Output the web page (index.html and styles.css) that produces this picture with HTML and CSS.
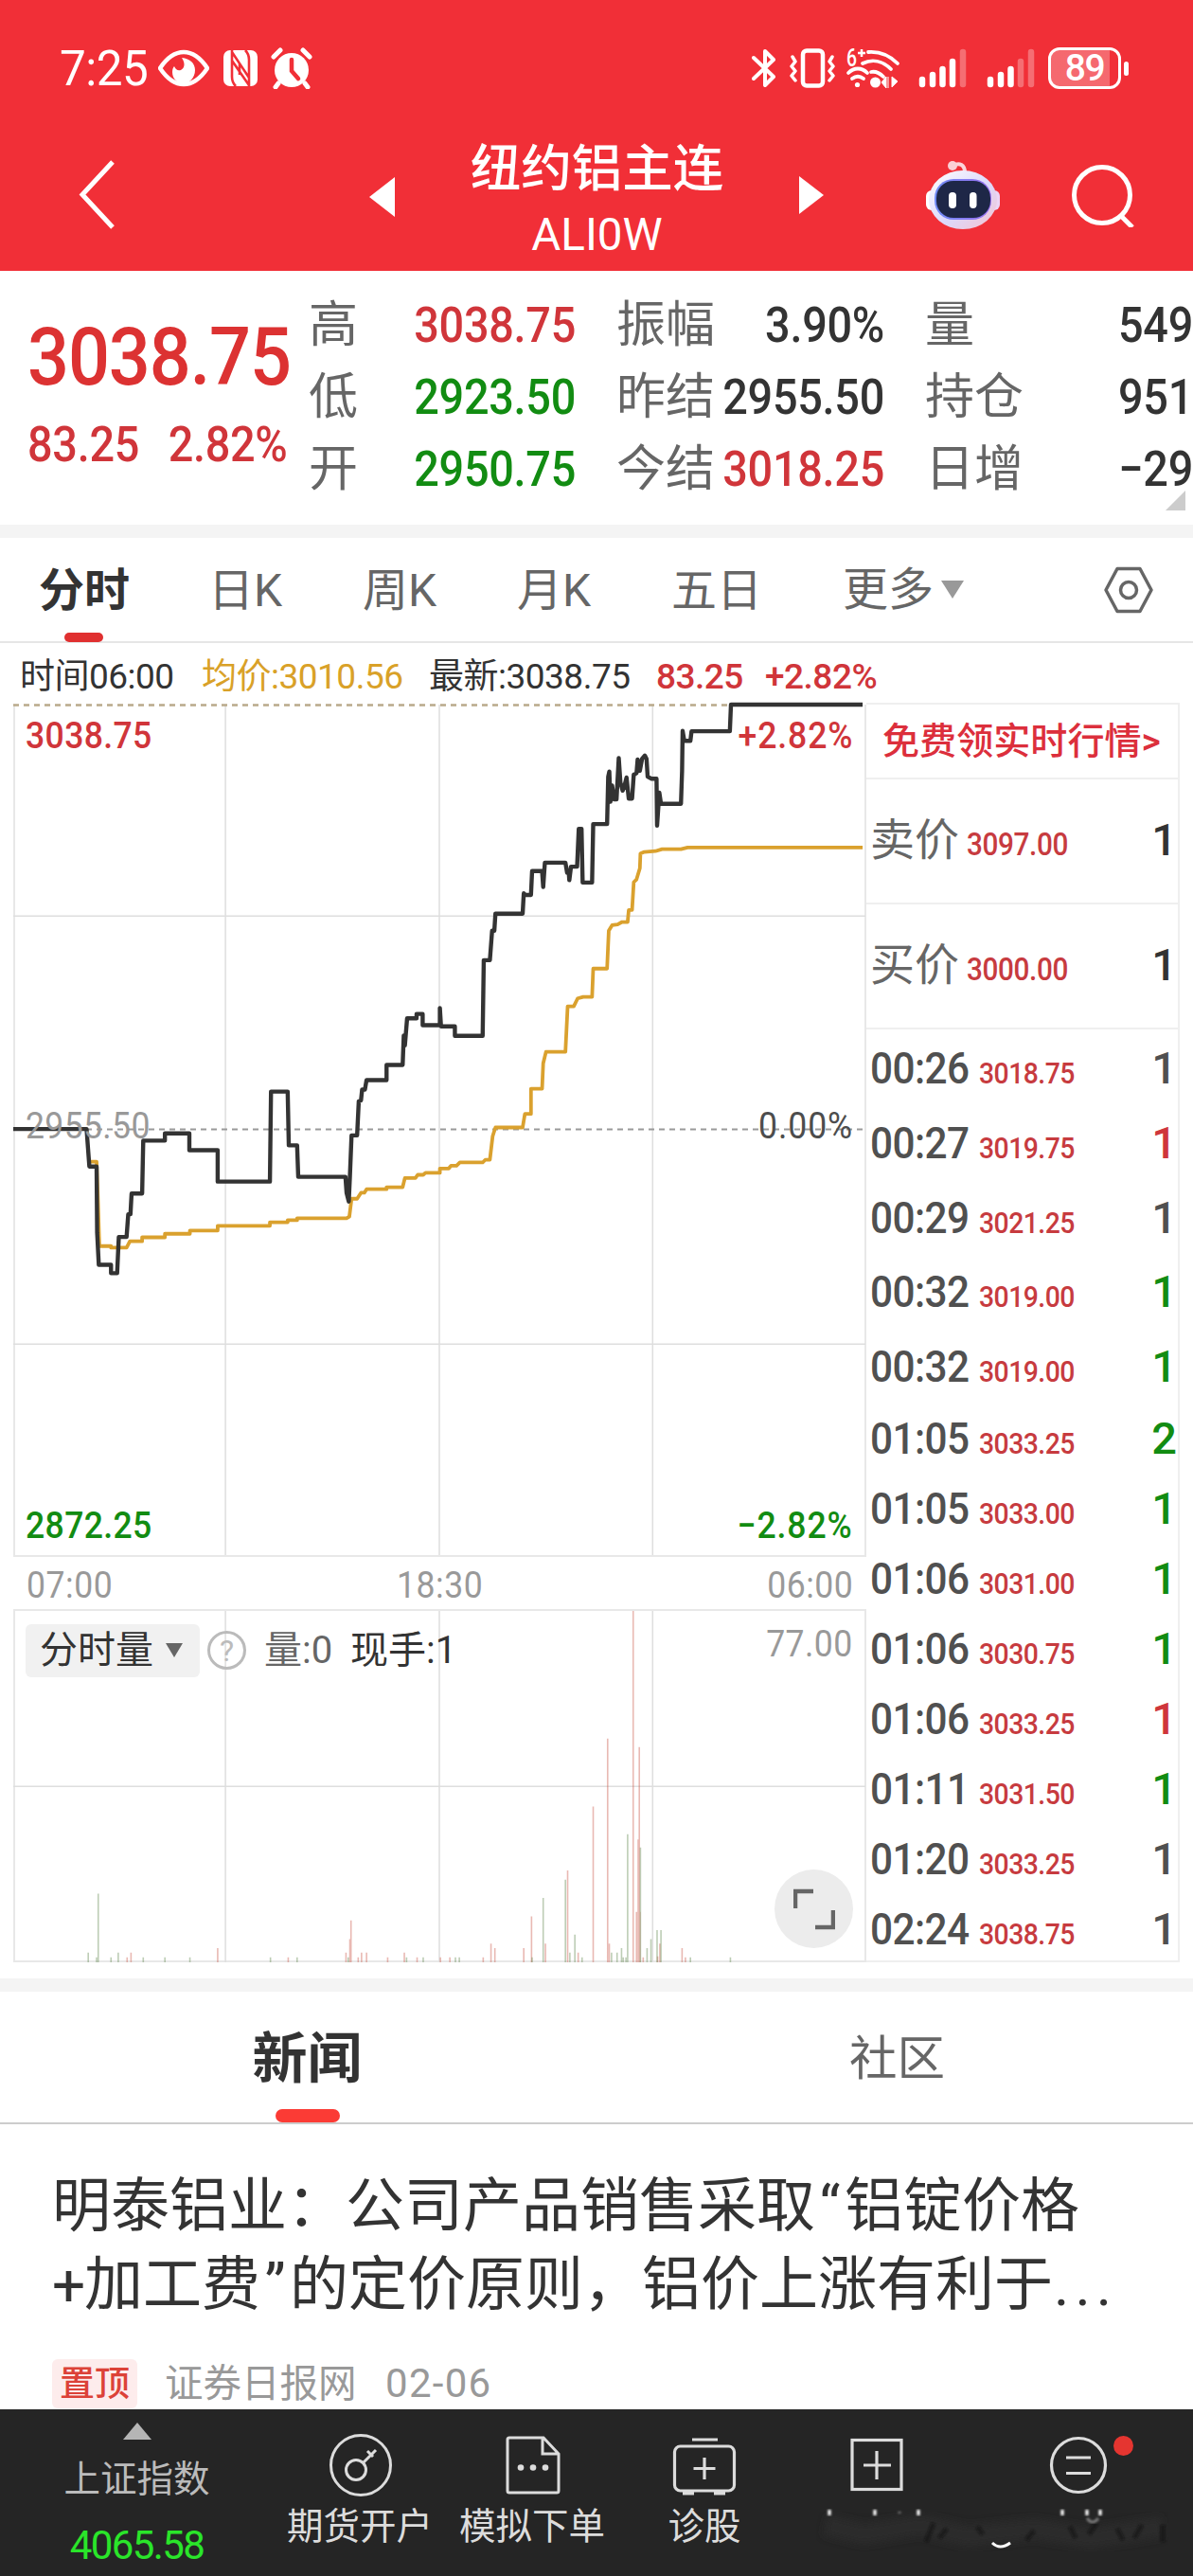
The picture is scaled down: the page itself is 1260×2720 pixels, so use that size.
FILE: index.html
```html
<!DOCTYPE html>
<html lang="zh-CN">
<head>
<meta charset="utf-8">
<title>纽约铝主连 ALI0W</title>
<link rel="stylesheet" href="styles.css">
</head>
<body>
<div class="page">

  <header class="header">
    <div class="status-bar">
      <span class="clock">7:25</span>
      <svg class="st-eye" width="54" height="40" viewBox="0 0 54 40">
        <path d="M2 20C10 8 18 3 27 3s17 5 25 17C44 32 36 37 27 37S10 32 2 20z" fill="none" stroke="#fff" stroke-width="4.5" stroke-linejoin="round"/>
        <path d="M25 9c9 1 14 6 14 13 0 8-6 14-12 14s-12-4-12-12c0-3 1-5 2-6 2 4 4 5 7 4 4-2 5-7 1-13z" fill="#fff"/>
      </svg>
      <svg class="st-nfc" width="38" height="40" viewBox="0 0 38 40">
        <rect x="1" y="1" width="36" height="38" rx="7" fill="#fff"/>
        <path d="M10 1v28c0 5 2 8 4 10M28 39V11c0-5-2-8-4-10M10 3l18 27M10 12l18 26M18 15v12" fill="none" stroke="#f12f37" stroke-width="2.6"/>
      </svg>
      <svg class="st-alarm" width="44" height="44" viewBox="0 0 44 44">
        <circle cx="22" cy="24" r="18" fill="#fff"/>
        <path d="M3 10l7-7M41 10l-7-7M8 38l-3 4M36 38l3 4" stroke="#fff" stroke-width="5" stroke-linecap="round"/>
        <path d="M22 13v12l7 8" fill="none" stroke="#f12f37" stroke-width="4.5" stroke-linecap="round"/>
      </svg>

      <svg class="st-bt" width="26" height="42" viewBox="0 0 26 42">
        <path d="M2 10l21 20-9 9V3l9 9L2 32" fill="none" stroke="#fff" stroke-width="4" stroke-linejoin="round" stroke-linecap="round"/>
      </svg>
      <svg class="st-vib" width="50" height="42" viewBox="0 0 50 42">
        <rect x="14" y="2.5" width="21" height="37" rx="4" fill="none" stroke="#fff" stroke-width="4.5"/>
        <path d="M3 9l3 5-4 5 4 5-4 5 4 5M45 9l-3 5 4 5-4 5 4 5-4 5" fill="none" stroke="#fff" stroke-width="3.5" stroke-linejoin="round" stroke-linecap="round"/>
      </svg>
      <svg class="st-wifi" width="56" height="44" viewBox="0 0 56 44">
        <text x="0" y="20" class="wifi-gen" textLength="11" lengthAdjust="spacingAndGlyphs">6</text>
        <path d="M12 6h8M16 2v8" stroke="#fff" stroke-width="2.5"/>
        <path d="M23 5c13-1 23 4 31 12M17 17c10-5 21-3 30 6M26 26c5-1 9 1 13 5M2 27c6-6 14-6 20 0M6 33c4-3 8-3 12 0" fill="none" stroke="#fff" stroke-width="3.8" stroke-linecap="round"/>
        <circle cx="11.500" cy="39.500" r="2.600" fill="#fff"/><circle cx="30.500" cy="37" r="5.500" fill="#fff"/>
        <path d="M37 37l5-6v12zM44 31v12M54 36l-6 6V31z" fill="#fff" stroke="#fff"/>
      </svg>
      <svg class="st-sig" width="52" height="42" viewBox="0 0 52 42" stroke="#fff" stroke-width="6.500" stroke-linecap="round">
        <path d="M4 33v5M15 28v10M25.500 22v16M36 14v24"/><path d="M47 4v34" opacity=".3"/>
      </svg>
      <svg class="st-sig2" width="52" height="42" viewBox="0 0 52 42" stroke="#fff" stroke-width="6.500" stroke-linecap="round">
        <path d="M4 33v5M15 28v10M25.500 22v16"/><path d="M36 14v24M47 4v34" opacity=".3"/>
      </svg>
      <span class="battery">89</span>
      <span class="battery-tip"></span>
    </div>

    <div class="nav-bar">
      <svg class="nav-back" width="42" height="74" viewBox="0 0 42 74"><path d="M37 2L5 36.500 37 71" fill="none" stroke="#fff" stroke-width="5"/></svg>
      <svg class="nav-prev" width="27" height="42" viewBox="0 0 27 42"><path d="M27 0v42L0 21z" fill="#fff"/></svg>
      <div class="nav-title">
        <div class="nav-name">纽约铝主连</div>
        <div class="nav-code">ALI0W</div>
      </div>
      <svg class="nav-next" width="27" height="40" viewBox="0 0 27 40"><path d="M0 0v40l26-20z" fill="#fff"/></svg>
      <svg class="nav-robot" width="80" height="74" viewBox="0 0 80 74">
        <defs>
          <linearGradient id="shell" x1="0" y1="0" x2="1" y2="1"><stop offset="0" stop-color="#fff"/><stop offset=".55" stop-color="#dcd8fb"/><stop offset="1" stop-color="#f6c3cf"/></linearGradient>
          <linearGradient id="rim" x1="0" y1="0" x2="1" y2="0"><stop offset="0" stop-color="#6f8bf5"/><stop offset="1" stop-color="#9a6ff0"/></linearGradient>
        </defs>
        <path d="M30 6c6-4 12-1 12 7" fill="none" stroke="#fbd5da" stroke-width="4"/>
        <circle cx="29" cy="6" r="5" fill="#fbd0d6"/>
        <rect x="1" y="32" width="12" height="21" rx="6" fill="#fff"/><rect x="67" y="32" width="12" height="21" rx="6" fill="#ecd5f5"/>
        <ellipse cx="40" cy="42" rx="36" ry="31" fill="url(#shell)"/>
        <rect x="10" y="20" width="60" height="43" rx="20" fill="url(#rim)"/>
        <rect x="12" y="22" width="57" height="39" rx="18" fill="#1e2747"/>
        <rect x="25" y="34" width="8" height="17" rx="4" fill="#fff"/><rect x="47" y="34" width="7.500" height="17" rx="3.700" fill="#fff"/>
      </svg>
      <svg class="nav-search" width="68" height="68" viewBox="0 0 68 68"><circle cx="33" cy="34" r="29.500" fill="none" stroke="#fff" stroke-width="5"/><path d="M53 56l12 12" stroke="#fff" stroke-width="5"/></svg>
    </div>
  </header>

  <section class="quote">
    <div class="quote-main">
      <div class="last-price">3038.75</div>
      <div class="change"><span>83.25</span><span>2.82%</span></div>
    </div>
    <dl class="stats col-1">
      <dt>高</dt><dd class="up">3038.75</dd>
      <dt>低</dt><dd class="down">2923.50</dd>
      <dt>开</dt><dd class="down">2950.75</dd>
    </dl>
    <dl class="stats col-2">
      <dt>振幅</dt><dd>3.90%</dd>
      <dt>昨结</dt><dd>2955.50</dd>
      <dt>今结</dt><dd class="up">3018.25</dd>
    </dl>
    <dl class="stats col-3">
      <dt>量</dt><dd>549</dd>
      <dt>持仓</dt><dd>951</dd>
      <dt>日增</dt><dd>−29</dd>
    </dl>
    <span class="more-corner"></span>
  </section>

  <nav class="period-tabs">
    <span class="tab active">分时</span>
    <span class="tab">日K</span>
    <span class="tab">周K</span>
    <span class="tab">月K</span>
    <span class="tab">五日</span>
    <span class="tab tab-more">更多<i class="caret"></i></span>
    <svg class="setting" width="54" height="50" viewBox="0 0 54 50"><path d="M15 2.500h24L51 25 39 47.500H15L3 25z" fill="none" stroke="#666" stroke-width="3.500" stroke-linejoin="round"/><circle cx="27" cy="25" r="8.500" fill="none" stroke="#666" stroke-width="3.500"/></svg>
  </nav>

  <div class="tip-line">
    <span class="t-time">时间06:00</span>
    <span class="t-avg">均价:3010.56</span>
    <span class="t-last">最新:3038.75</span>
    <span class="t-chg up">83.25</span>
    <span class="up">+2.82%</span>
  </div>

  <section class="market">
    <div class="charts">
      <div class="price-chart">
        <svg width="900" height="898" viewBox="24 104 1534 2136" preserveAspectRatio="none">
          <path class="grid" d="M24 635H1558M24 1710H1558M406 104V2240M791 104V2240M1175 104V2240"/>
          <path class="dash" d="M24 1171H1558"/>
          <path class="dash top" d="M24 105H1558"/>
          <!-- average price -->
          <path class="line avg" d="M160 1252H174L176 1330 179 1464H200V1468H228L234 1452H256V1442H297V1433H342V1425H392V1413H486V1404H518V1399H535V1394H624L629 1390 633 1345H643L650 1330H656L660 1321H696V1316H725L729 1293H748L752 1285H762L766 1280H792V1269H808L812 1262H822L828 1254H869L874 1247H882L887 1188 892 1166H941L945 1132H956V1069H976L978 1005 983 976H1018L1022 862H1033L1040 842 1050 838H1066L1068 767H1093L1096 672 1102 658 1112 656 1120 650H1130L1132 620H1138L1141 550 1146 543 1152 515 1153 478 1160 474 1180 472 1192 467H1226L1238 463H1553"/>
          <!-- latest price -->
          <path class="line last" d="M24 1170H156L161 1264H174L175 1430 178 1511H200V1532H211L214 1441H228L231 1384H235L237 1332H256L258 1199H297V1181H341V1223H392V1302H486L488 1076H518L520 1211H535L537 1290H622L624 1330 628 1352 630 1290 633 1186H643L646 1100 650 1098 652 1071H657L660 1047H696V1009H725L727 935 729 960 733 892H750V881H761V909H792V866L794 912H819V936H869L871 746H882L886 672H890L892 629H941L943 578 946 582H956L958 522H976L978 562 981 501H1018L1021 526 1024 525 1025 545 1028 511H1039L1042 416H1047L1049 551H1066L1068 404H1093L1095 285 1097 272 1099 348 1102 307 1106 342H1110L1114 238 1117 300 1121 320 1124 310 1128 287 1132 340H1138L1141 280 1146 276 1148 242 1152 270 1156 240 1161 232 1164 240 1166 285 1173 290H1182L1183 408 1187 325 1190 353H1226L1228 270 1229 170 1232 195H1243L1245 171H1314L1316 104H1553"/>
        </svg>
        <span class="lab left tl up">3038.75</span>
        <span class="lab right tr up">+2.82%</span>
        <span class="lab left ml">2955.50</span>
        <span class="lab right mr">0.00%</span>
        <span class="lab left bl down">2872.25</span>
        <span class="lab right br down">−2.82%</span>
      </div>
      <div class="time-axis"><span>07:00</span><span>18:30</span><span>06:00</span></div>
      <div class="vol-chart">
        <svg width="900" height="371" viewBox="24 720 1534 787" preserveAspectRatio="none">
          <path class="grid" d="M24 1113H1558M406 720V1507M791 720V1507M1175 720V1507"/>
          <path class="vol-up" d="M1140 1507V720M1094 1507V1006M1151 1507V1025M1149 1507V1232M1068 1507V1158M1022 1507V1301M957 1507V1404M632 1507V1413M630 1507V1455M884 1507V1465M891 1507V1475M982 1507V1465M1146 1507V1394M1151 1507V1394M1152 1507V1394M229 1507V1496M236 1507V1485M623 1507V1485M651 1507V1485M660 1507V1485M645 1507V1496M943 1507V1475M1041 1507V1485M1097 1507V1465M1184 1507V1494M1188 1507V1465M1228 1507V1475M1234 1507V1496M728 1507V1485M751 1507V1496M793 1507V1496M810 1507V1496M870 1507V1496M698 1507V1496M1158 1507V1496M392 1507V1475M519 1507V1496"/>
          <path class="vol-down" d="M177 1507V1353M978 1507V1363M1018 1507V1322M1035 1507V1445M1130 1507V1220M1153 1507V1250M1183 1507V1435M1190 1507V1435M1172 1507V1455M1165 1507V1475M1119 1507V1475M1111 1507V1485M1101 1507V1485M1026 1507V1485M1048 1507V1496M159 1507V1485M174 1507V1496M200 1507V1496M213 1507V1485M258 1507V1496M297 1507V1496M342 1507V1496M487 1507V1496M535 1507V1496M627 1507V1496M732 1507V1496M762 1507V1496M820 1507V1496M827 1507V1496M958 1507V1496M1122 1507V1496M1127 1507V1496M1243 1507V1496M1315 1507V1496"/>
        </svg>
        <div class="vol-head">
          <span class="vol-btn">分时量<i class="caret dark"></i></span>
          <span class="help">?</span>
          <span class="vol-qty">量:0</span>
          <span class="vol-now">现手:1</span>
          <span class="vol-max">77.00</span>
        </div>
        <span class="expand"><svg width="44" height="44" viewBox="0 0 44 44"><path d="M2 21V3h19M42 23v18H23" fill="none" stroke="#666" stroke-width="4.500"/></svg></span>
      </div>
    </div>

    <aside class="panel">
      <div class="promo">免费领实时行情&gt;</div>
      <div class="bid"><b>卖价</b><em>3097.00</em><i>1</i></div>
      <div class="bid"><b>买价</b><em>3000.00</em><i>1</i></div>
      <div class="ticks">
        <div class="tick wide"><b>00:26</b><em>3018.75</em><i>1</i></div>
        <div class="tick wide"><b>00:27</b><em>3019.75</em><i class="up">1</i></div>
        <div class="tick wide"><b>00:29</b><em>3021.25</em><i>1</i></div>
        <div class="tick wide"><b>00:32</b><em>3019.00</em><i class="down">1</i></div>
        <div class="tick wide"><b>00:32</b><em>3019.00</em><i class="down">1</i></div>
        <div class="tick"><b>01:05</b><em>3033.25</em><i class="down">2</i></div>
        <div class="tick"><b>01:05</b><em>3033.00</em><i class="down">1</i></div>
        <div class="tick"><b>01:06</b><em>3031.00</em><i class="down">1</i></div>
        <div class="tick"><b>01:06</b><em>3030.75</em><i class="down">1</i></div>
        <div class="tick"><b>01:06</b><em>3033.25</em><i class="up">1</i></div>
        <div class="tick"><b>01:11</b><em>3031.50</em><i class="down">1</i></div>
        <div class="tick"><b>01:20</b><em>3033.25</em><i>1</i></div>
        <div class="tick"><b>02:24</b><em>3038.75</em><i>1</i></div>
      </div>
    </aside>
  </section>

  <nav class="news-tabs">
    <span class="news-tab active">新闻</span>
    <span class="news-tab">社区</span>
  </nav>

  <article class="news">
    <h2>明泰铝业：公司产品销售采取<span class="q">“</span>铝锭价格<br><span class="plus">+</span>加工费<span class="q">”</span>的定价原则，铝价上涨有利于<span class="dots">...</span></h2>
    <div class="meta"><span class="badge">置顶</span><span class="source">证券日报网</span><span class="date">02-06</span></div>
  </article>

  <footer class="bottom-bar">
    <div class="index">
      <i class="up-caret"></i>
      <span class="index-name">上证指数</span>
      <span class="index-value">4065.58</span>
    </div>
    <div class="item">
      <svg width="68" height="68" viewBox="0 0 68 68" fill="none" stroke="#dcdcdc" stroke-width="3"><circle cx="35" cy="34" r="31.500"/><circle cx="30" cy="39" r="10.500"/><path d="M38 31l13-13M42 19l6 6"/></svg>
      <span>期货开户</span>
    </div>
    <div class="item">
      <svg width="68" height="68" viewBox="0 0 68 68" fill="none" stroke="#dcdcdc" stroke-width="3"><path d="M46 5H10q-2 0-2 2v54q0 2 2 2h50q2 0 2-2V22zM45 5v17h17"/><g fill="#dcdcdc" stroke="none"><circle cx="22" cy="36.500" r="3.300"/><circle cx="35" cy="36.500" r="3.300"/><circle cx="48" cy="36.500" r="3.300"/></g></svg>
      <span>模拟下单</span>
    </div>
    <div class="item">
      <svg width="68" height="68" viewBox="0 0 68 68" fill="none" stroke="#dcdcdc" stroke-width="3.200"><rect x="2.500" y="14" width="63" height="47" rx="6"/><path d="M21 7h27M34 26v23M22.500 37.500h23"/><path d="M11 63h12M44 63h12" stroke-width="5"/></svg>
      <span>诊股</span>
    </div>
    <div class="item">
      <svg width="68" height="68" viewBox="0 0 68 68" fill="none" stroke="#dcdcdc" stroke-width="3.200"><rect x="8" y="7.500" width="52" height="52"/><path d="M34 19v30M20 34h29"/></svg>
    </div>
    <div class="item last-item">
      <svg width="68" height="68" viewBox="0 0 68 68" fill="none" stroke="#dcdcdc" stroke-width="3.200"><circle cx="34" cy="34" r="28.500"/><path d="M21 26h26M21 42.500h26"/></svg>
      <i class="dot"></i>
    </div>
    <!-- faded captions under the last two items -->
    <svg class="smudge" width="372" height="54" viewBox="0 0 372 54">
      <defs><filter id="soft"><feGaussianBlur stdDeviation="1.100"/></filter><filter id="haze" x="-10%" y="-100%" width="120%" height="300%"><feGaussianBlur stdDeviation="4"/></filter></defs>
      <path d="M10 18l40 10 60-10 50 12 70-8 60 10 76-12" stroke="#2f2f2f" stroke-width="22" fill="none" filter="url(#haze)" opacity=".7"/>
      <path d="M124 16l-8 20M138 22l-8 10M170 20l6 8M230 24l-8 10M268 20l6 12M296 16l-8 12M318 22l6 12M344 18l-8 14M366 18v18" stroke="#0c0c0c" stroke-width="5" fill="none" filter="url(#soft)" opacity=".5"/>
      <path d="M14 2v6M62 2v6M108 2v6M260 2v6M286 2v6M300 2v6" stroke="#fff" stroke-width="3.200" filter="url(#soft)"/>
      <path d="M88 4v2M286 11q6 8 12 0" stroke="#777" stroke-width="3" fill="none" filter="url(#soft)"/>
      <path d="M186 37q8 8 19 0" stroke="#fff" stroke-width="3" fill="none"/>
    </svg>
  </footer>

</div>
</body>
</html>
```
FILE: styles.css
```css
* {
  box-sizing: border-box;
}

body {
  margin: 0;
  background: #fff;
  color: #333;
  font-family: Roboto, "Noto Sans CJK SC", sans-serif;
}

.page {
  width: 1260px;
  height: 2720px;
  overflow: hidden;
  display: flex;
  flex-direction: column;
}

svg {
  display: block;
  flex: none;
}

i, em {
  font-style: normal;
}

b {
  font-weight: 400;
}

.up {
  color: #d0353a;
}

.down {
  color: #128c12;
}

/* header */
.header {
  height: 286px;
  flex: none;
  background: #f12f37;
  color: #fff;
}

.status-bar {
  height: 144px;
  display: flex;
  align-items: center;
  padding-left: 63px;
}

.clock {
  width: 104px;
  font-size: 52px;
  letter-spacing: -0.5px;
  transform: scaleX(0.95);
  transform-origin: left;
}

.st-nfc {
  margin-left: 14px;
}

.st-alarm {
  margin-left: 13px;
}

.st-bt {
  margin-left: 464px;
}

.st-vib {
  margin-left: 14px;
}

.st-wifi {
  margin-left: 10px;
  overflow: visible;
}

.wifi-gen {
  font: 500 26px Roboto, sans-serif;
  fill: #fff;
}

.st-sig {
  margin-left: 20px;
}

.st-sig2 {
  margin-left: 20px;
}

.battery {
  width: 77px;
  height: 44px;
  margin-left: 13px;
  border: 3px solid #fff;
  border-radius: 12px;
  background: linear-gradient(90deg, rgba(255, 255, 255, 0.28) 88%, transparent 88%);
  font-size: 39px;
  font-weight: 500;
  line-height: 39px;
  text-align: center;
  letter-spacing: -1.5px;
}

.battery-tip {
  width: 5px;
  height: 15px;
  margin-left: 3px;
  border-radius: 3px;
  background: #fff;
}

.nav-bar {
  height: 142px;
  display: flex;
  align-items: center;
  padding: 0 0 18px 82px;
}

.nav-prev {
  margin-left: 266px;
  margin-top: 3px;
}

.nav-title {
  width: 427px;
  padding-top: 14px;
  text-align: center;
}

.nav-name {
  font-size: 53.5px;
  line-height: 70px;
  font-weight: 500;
}

.nav-code {
  font-size: 47.5px;
  line-height: 68px;
}

.nav-robot {
  margin-left: 106px;
}

.nav-search {
  margin-left: 74px;
}

/* quote */
.quote {
  position: relative;
  flex: none;
  height: 282px;
  display: flex;
  padding-top: 20px;
  border-bottom: 14px solid #f4f4f4;
  overflow: hidden;
}

.quote-main {
  width: 326px;
  padding-left: 29px;
  color: #d0353a;
}

/* digits are set slightly condensed */
.last-price,
.change,
.stats dd,
.lab,
.time-axis span,
.vol-max,
.bid em,
.tick em,
.tick b {
  transform: scaleX(0.9);
  transform-origin: left;
}

.last-price {
  margin-top: 21px;
  color: #dc3232;
  font-size: 86px;
  font-weight: 500;
  line-height: 100px;
  letter-spacing: -1.2px;
}

.change {
  display: flex;
  gap: 34px;
  margin-top: 13px;
  font-size: 52px;
  font-weight: 500;
  line-height: 60px;
  letter-spacing: -0.3px;
}

.stats {
  display: grid;
  grid-template-columns: 88px 1fr;
  grid-auto-rows: 76px;
  margin: 0;
  flex: none;
  font-size: 52px;
  line-height: 76px;
}

.stats dt {
  color: #666;
  white-space: nowrap;
}

.stats dd {
  margin: 0;
  text-align: right;
  font-weight: 500;
  letter-spacing: -0.3px;
  white-space: nowrap;
  transform-origin: right;
}

.col-1 {
  width: 282px;
}

.col-2 {
  width: 283px;
  margin-left: 43px;
}

.col-3 {
  width: 283px;
  margin-left: 43px;
}

.more-corner {
  position: absolute;
  right: 8px;
  bottom: 15px;
  border-left: 21px solid transparent;
  border-bottom: 21px solid #ccc;
}

/* period tabs */
.period-tabs {
  flex: none;
  height: 111px;
  display: flex;
  align-items: center;
  padding-left: 41px;
  border-bottom: 2px solid #e6e6e6;
  color: #666;
  font-size: 48px;
  line-height: 111px;
}

.tab {
  width: 163px;
  height: 109px;
}

.tab:nth-child(1) {
  width: 179px;
}

.tab:nth-child(5) {
  width: 181px;
}

.tab.active {
  color: #333;
  font-weight: 700;
}

.tab.active::after {
  content: "";
  display: block;
  width: 41px;
  height: 10px;
  margin: -11px 0 0 27px;
  border-radius: 5px;
  background: #e03030;
}

.tab-more {
  display: flex;
  align-items: center;
  width: 275px;
}

.caret {
  margin-left: 8px;
  border: 12px solid transparent;
  border-top: 19px solid #999;
  border-bottom: 0;
}

.tip-line {
  flex: none;
  height: 65px;
  display: flex;
  padding-left: 21px;
  font-size: 37px;
  line-height: 71px;
  letter-spacing: -0.5px;
  white-space: nowrap;
}

.t-time {
  width: 192px;
}

.t-avg {
  width: 240px;
  color: #d9a128;
}

.t-last {
  width: 240px;
}

.t-chg {
  width: 115px;
}

.tip-line .up {
  font-weight: 500;
}

/* charts and side panel */
.market {
  flex: none;
  height: 1345px;
  display: flex;
  padding-left: 14px;
}

.charts {
  width: 901px;
}

.price-chart {
  position: relative;
  height: 900px;
  border: 2px solid #e8e8e8;
  border-top: 0;
}

.price-chart svg,
.vol-chart > svg {
  margin-left: -2px;
}

.price-chart svg {
  overflow: visible;
}

.grid {
  fill: none;
  stroke: #dedede;
  stroke-width: 1.5;
  vector-effect: non-scaling-stroke;
}

.dash {
  fill: none;
  stroke: #999;
  stroke-width: 2;
  stroke-dasharray: 6 5;
  vector-effect: non-scaling-stroke;
}

.dash.top {
  stroke: #b9a98a;
  stroke-width: 2.5;
}

.line {
  fill: none;
  stroke-width: 3.8;
  stroke-linejoin: round;
  vector-effect: non-scaling-stroke;
}

.line.last {
  stroke: #333;
  stroke-width: 4.4;
}

.line.avg {
  stroke: #daa12e;
}

.lab {
  position: absolute;
  font-size: 39.5px;
  font-weight: 500;
  line-height: 46px;
}

.left {
  left: 11px;
  letter-spacing: 0.4px;
}

.right {
  right: 12px;
  transform-origin: right;
  letter-spacing: 1px;
}

.tl,
.tr {
  top: 10px;
}

.ml,
.mr {
  top: 422px;
  font-weight: 400;
}

.ml {
  color: #999;
}

.mr {
  color: #4d4d4d;
}

.bl,
.br {
  bottom: 8px;
}

.time-axis {
  height: 55px;
  display: flex;
  justify-content: space-between;
  padding: 0 14px 0 14px;
  color: #999;
  font-size: 39.5px;
  line-height: 59px;
  letter-spacing: 0.6px;
}

.time-axis span:nth-child(2) {
  transform-origin: center;
}

.time-axis span:last-child,
.vol-head .vol-max {
  transform-origin: right;
}

.vol-chart {
  position: relative;
  height: 373px;
  border: 2px solid #e8e8e8;
}

.vol-up,
.vol-down {
  fill: none;
  stroke: rgba(200, 80, 65, 0.4);
  stroke-width: 1.6;
  vector-effect: non-scaling-stroke;
}

.vol-down {
  stroke: rgba(90, 130, 70, 0.4);
}

.vol-head {
  position: absolute;
  left: 11px;
  right: 12px;
  top: 13px;
  display: flex;
  align-items: center;
  font-size: 40px;
  line-height: 57px;
}

.vol-btn {
  width: 184px;
  height: 56px;
  display: flex;
  align-items: center;
  padding-left: 15px;
  border-radius: 6px;
  background: #f1f1f1;
}

.caret.dark {
  margin-left: 13px;
  border-width: 15px 9.5px 0;
  border-top-color: #666;
}

.help {
  width: 41px;
  height: 41px;
  margin-left: 8px;
  border: 3px solid #bbb;
  border-radius: 50%;
  color: #bbb;
  font-size: 32px;
  line-height: 36px;
  text-align: center;
}

.vol-qty {
  width: 91px;
  margin-left: 19px;
  color: #666;
}

.vol-max {
  margin-left: auto;
  margin-top: -15px;
  color: #999;
  font-size: 39.5px;
  letter-spacing: 0.5px;
}

.expand {
  position: absolute;
  right: 12px;
  bottom: 13px;
  width: 83px;
  height: 83px;
  display: flex;
  align-items: center;
  justify-content: center;
  border-radius: 50%;
  background: #ececec;
}

.panel {
  width: 331px;
  height: 1330px;
  margin-top: -2px;
  border: 2px solid #efefef;
  border-left: 0;
  display: flex;
  flex-direction: column;
}

.promo {
  height: 79px;
  padding-left: 17px;
  border-bottom: 2px solid #efefef;
  color: #dc2f3c;
  font-size: 39.1px;
  font-weight: 500;
  line-height: 79px;
  white-space: nowrap;
}

.bid,
.tick {
  display: flex;
  align-items: baseline;
  padding: 0 1px 0 4px;
}

.bid {
  height: 132px;
  border-bottom: 2px solid #efefef;
  font-size: 47px;
  line-height: 128px;
}

.bid b {
  width: 102px;
  color: #666;
}

.bid em,
.tick em {
  color: #c73b3f;
  font-size: 33px;
  font-weight: 500;
  letter-spacing: -0.4px;
}

.bid i,
.tick i {
  margin-left: auto;
  font-weight: 500;
}

.ticks {
  padding-top: 1px;
}

.tick {
  height: 74px;
  font-size: 47px;
  line-height: 74px;
  color: #505050;
}

.tick.wide {
  height: 78.8px;
  line-height: 79.4px;
}

.tick b {
  width: 115px;
  font-weight: 500;
  letter-spacing: -0.6px;
}

.tick em {
  font-size: 31.5px;
  letter-spacing: -0.6px;
}

.tick .up {
  color: #cf363b;
}

.tick .down {
  color: #128c12;
}

/* news */
.news-tabs {
  flex: none;
  height: 154px;
  display: flex;
  border-top: 14px solid #f4f4f4;
  border-bottom: 2px solid #ccc;
  padding-left: 13px;
}

.news-tab {
  width: 623px;
  color: #666;
  font-size: 50.5px;
  line-height: 142px;
  text-align: center;
}

.news-tab.active {
  color: #333;
  font-size: 58px;
  font-weight: 700;
}

.news-tab.active::after {
  content: "";
  display: block;
  width: 68px;
  height: 14px;
  margin: -18px auto 0;
  border-radius: 7px;
  background: #fb3b35;
}

.news {
  padding: 45px 0 0 55px;
}

.news h2 {
  margin: 0;
  font-size: 62px;
  font-weight: 400;
  line-height: 83.4px;
  white-space: nowrap;
}

.q,
.plus {
  display: inline-block;
  width: 31px;
  text-align: center;
}

.plus {
  width: 34px;
  text-align: left;
}

.dots {
  letter-spacing: 6px;
  margin-left: 1px;
}

.meta {
  display: flex;
  align-items: center;
  margin-top: 35px;
  color: #999;
  font-size: 40.5px;
  line-height: 54px;
}

.badge {
  width: 90px;
  height: 52px;
  border-radius: 6px;
  background: #fdecec;
  color: #dc4238;
  font-size: 37px;
  font-weight: 500;
  text-align: center;
}

.source {
  width: 233px;
  margin-left: 29px;
}

.date {
  font-size: 42px;
  letter-spacing: 1.3px;
}

/* bottom bar */
.bottom-bar {
  position: fixed;
  left: 0;
  top: 2544px;
  width: 1260px;
  height: 176px;
  display: flex;
  background: #252525;
  color: #dcdcdc;
  font-size: 38.5px;
}

.index {
  width: 289px;
  display: flex;
  flex-direction: column;
  align-items: center;
}

.up-caret {
  margin-top: 14px;
  border: 15.500px solid transparent;
  border-top: 0;
  border-bottom: 18px solid #b5b5b5;
}

.index-name {
  margin-top: 14px;
  color: #bbb;
  line-height: 56px;
}

.index-value {
  margin-top: 14px;
  color: #2ae52a;
  font-size: 42px;
  line-height: 56px;
  letter-spacing: -1.6px;
}

.item {
  width: 182px;
  padding-top: 25px;
  display: flex;
  flex-direction: column;
  align-items: center;
  position: relative;
}

.item span {
  margin-top: 3px;
  line-height: 56px;
}

.last-item {
  width: 243px;
}

.dot {
  position: absolute;
  left: 159px;
  top: 28px;
  width: 21px;
  height: 21px;
  border-radius: 50%;
  background: #e53530;
}

.smudge {
  position: absolute;
  left: 862px;
  top: 104px;
}
```
